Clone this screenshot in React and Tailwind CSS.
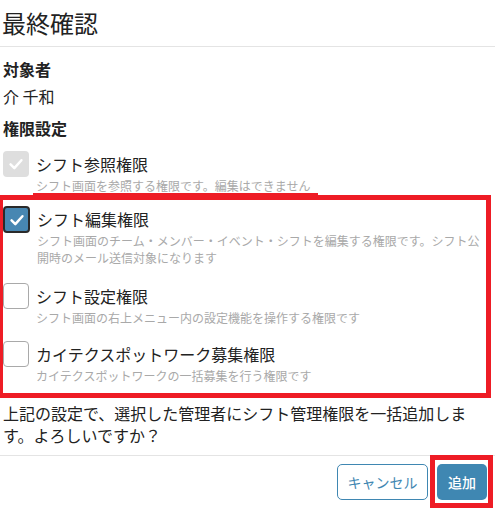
import React from 'react';

const Check = ({ className }) => (
  <svg viewBox="0 0 24 24" className={className} fill="none" stroke="currentColor" strokeWidth="3" strokeLinecap="round" strokeLinejoin="round">
    <path d="M5.5 12.5l4.5 4.5 8.5-9.5" />
  </svg>
);

const Box = ({ state }) => {
  if (state === 'disabled') {
    return (
      <div className="w-[26px] h-[26px] shrink-0 rounded-[4px] bg-[#dedede] flex items-center justify-center text-white">
        <Check className="w-[20px] h-[20px]" />
      </div>
    );
  }
  if (state === 'checked') {
    return (
      <div className="w-[27px] h-[27px] shrink-0 rounded-[4px] border-2 border-[#2a2a2a] bg-[#4787b2] flex items-center justify-center text-white">
        <Check className="w-[20px] h-[20px]" />
      </div>
    );
  }
  return <div className="w-[26px] h-[26px] shrink-0 rounded-[4px] border border-[#a9a9a9] bg-white" />;
};

const Permission = ({ state, label, desc, className = '' }) => (
  <div className={`flex items-start gap-[7px] ${className}`}>
    <Box state={state} />
    <div className="flex-1 min-w-0">
      <div className="text-[16px] leading-[26px] text-[#222]">{label}</div>
      <div className="text-[12px] leading-[17px] text-[#a9a9a9]">{desc}</div>
    </div>
  </div>
);

const App = () => {
  return (
    <div className="relative w-[495px] h-[510px] bg-white overflow-hidden font-['Noto_Sans_CJK_JP',sans-serif]">
      <div className="h-[47px] pl-[2px] flex items-center border-b border-[#e4e4e4] text-[24px] text-[#222]">
        最終確認
      </div>

      <div className="pl-[3px] pr-[14px] pt-[10px]">
        <div className="text-[16px] leading-[24px] font-bold text-[#222]">対象者</div>
        <div className="mt-[3px] text-[16px] leading-[24px] text-[#222]">介 千和</div>
        <div className="mt-[8px] text-[16px] leading-[24px] font-bold text-[#222]">権限設定</div>

        <div className="mt-[11px]">
          <Permission
            state="disabled"
            label="シフト参照権限"
            desc="シフト画面を参照する権限です。編集はできません"
          />
          <Permission
            className="mt-[12px]"
            state="checked"
            label="シフト編集権限"
            desc="シフト画面のチーム・メンバー・イベント・シフトを編集する権限です。シフト公開時のメール送信対象になります"
          />
          <Permission
            className="mt-[17px]"
            state="unchecked"
            label="シフト設定権限"
            desc="シフト画面の右上メニュー内の設定機能を操作する権限です"
          />
          <Permission
            className="mt-[15px]"
            state="unchecked"
            label="カイテクスポットワーク募集権限"
            desc="カイテクスポットワークの一括募集を行う権限です"
          />
        </div>

        <p className="mt-[18px] mb-[9px] text-[16px] leading-[22px] text-[#222]">
          上記の設定で、選択した管理者にシフト管理権限を一括追加します。よろしいですか？
        </p>
      </div>

      <div className="border-t border-[#e4e4e4] pt-[8px] pr-[8px] flex justify-end gap-[9px]">
        <button className="w-[91px] h-[36px] rounded-[5px] border border-[#3f87b2] bg-white text-[14px] text-[#3f87b2]">
          キャンセル
        </button>
        <button className="w-[50px] h-[36px] rounded-[5px] bg-[#3f87b2] text-[14px] font-medium text-white">
          追加
        </button>
      </div>

      {/* red annotation marks drawn over the screenshot */}
      <div className="absolute left-[33px] top-[193px] w-[285px] h-[3px] bg-[#ee1c25]" />
      <div className="absolute left-[-2px] top-[195px] w-[493px] h-[203px] border-[5px] border-[#ee1c25]" />
      <div className="absolute left-[430px] top-[455px] w-[63px] h-[53px] border-[5px] border-[#ee1c25]" />
    </div>
  );
};

export default App;
